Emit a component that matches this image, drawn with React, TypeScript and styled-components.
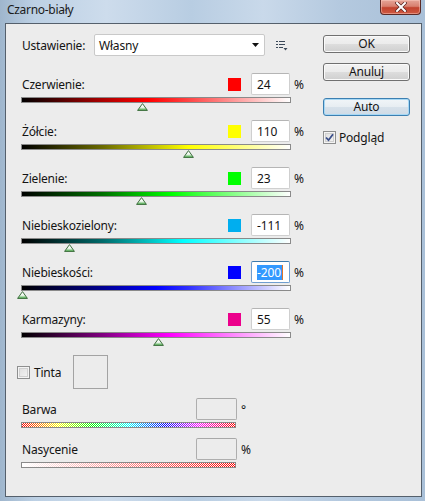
import React from "react";
import styled, { createGlobalStyle } from "styled-components";

const Global = createGlobalStyle`
  html, body { margin: 0; padding: 0; background: #b9cde2; }
  body { font-family: "Noto Sans", "Liberation Sans", sans-serif; }
  * { box-sizing: border-box; }
`;

const Window = styled.div`
  width: 425px;
  height: 501px;
  display: flex;
  flex-direction: column;
  background: linear-gradient(90deg, #9fb6cd 0%, #bcd0e4 8%, #cddcec 25%, #b8cde2 45%, #c9d9ea 62%, #b4c9df 80%, #a9c0d8 100%);
  overflow: hidden;
`;

const TitleBar = styled.div`
  height: 23px;
  flex: none;
  display: flex;
  align-items: flex-start;
  padding-left: 7px;
  padding-right: 4px;
`;

const Title = styled.div`
  margin-top: 2px;
  font-size: 12px;
  letter-spacing: -0.3px;
  color: #1b1b1b;
  line-height: 16px;
`;

const CloseButton = styled.div`
  margin-left: auto;
  width: 41px;
  height: 15px;
  border: 1px solid #5b2a26;
  border-top: none;
  border-radius: 0 0 4px 4px;
  background: linear-gradient(to bottom, #e5a597 0%, #d8806f 45%, #c2432e 55%, #cf5a42 100%);
  box-shadow: inset 0 0 0 1px rgba(255, 210, 200, 0.45);
  display: flex;
  align-items: center;
  justify-content: center;
`;

const Client = styled.div`
  flex: 1;
  margin: 0 3px 4px 5px;
  border: 1px solid #55606c;
  background: #ececec;
  display: flex;
  color: #141414;
  font-size: 12px;
`;

const LeftPanel = styled.div`
  width: 317px;
  flex: none;
  padding: 10px 0 0 15px;
  display: flex;
  flex-direction: column;
`;

const RightPanel = styled.div`
  padding-top: 11px;
  display: flex;
  flex-direction: column;
  align-items: flex-start;
`;

const PresetRow = styled.div`
  display: flex;
  align-items: center;
  height: 22px;
  margin-bottom: 17px;
`;

const PresetLabel = styled.div`
  width: 73px;
  padding-left: 1px;
  letter-spacing: -0.2px;
`;

const Select = styled.div`
  width: 171px;
  height: 22px;
  background: #fff;
  border: 1px solid #c9c9c9;
  border-radius: 2px;
  display: flex;
  align-items: center;
  padding: 0 5px 0 4px;
  letter-spacing: -0.2px;
`;

const SelectText = styled.div`
  flex: 1;
`;

const MenuIcon = styled.div`
  margin-left: 11px;
  display: flex;
`;

const SliderRow = styled.div`
  width: 283px;
  height: 47px;
  flex: none;
  display: flex;
  flex-direction: column;
`;

const Header = styled.div<{ $w: number }>`
  width: ${(p) => p.$w}px;
  height: 22px;
  display: flex;
  align-items: center;
  flex: none;
`;

const Label = styled.div`
  flex: 1;
  padding-left: 1px;
  letter-spacing: -0.2px;
`;

const Swatch = styled.div<{ $c: string }>`
  width: 13px;
  height: 13px;
  background: ${(p) => p.$c};
  margin-right: 10px;
`;

const Field = styled.div<{ $w: number; $focused?: boolean; $disabled?: boolean }>`
  width: ${(p) => p.$w}px;
  height: 22px;
  background: ${(p) => (p.$disabled ? "#ececec" : "#fff")};
  border: 1px solid ${(p) => (p.$focused ? "#6f9ed0" : p.$disabled ? "#aeaeae" : "#cfcfcf")};
  border-top-color: ${(p) => (p.$focused ? "#3d7bad" : p.$disabled ? "#a8a8a8" : "#b5b5b5")};
  border-radius: 2px;
  display: flex;
  align-items: center;
  padding-left: 5px;
  letter-spacing: -0.1px;
`;

const Selected = styled.span`
  background: #3399ff;
  color: #fff;
  line-height: 15px;
  padding: 0 1px 0 0;
`;

const Caret = styled.span`
  width: 1px;
  height: 15px;
  background: #e0742a;
`;

const Unit = styled.div`
  margin-left: 4px;
  width: 10px;
`;

const Bar = styled.div<{ $w: number; $bg?: string }>`
  width: ${(p) => p.$w}px;
  height: 6px;
  margin-top: 2px;
  border: 1px solid #8a8a8a;
  background: ${(p) => p.$bg || "transparent"};
  flex: none;
  display: flex;
  overflow: hidden;
`;

const ThumbTrack = styled.div`
  position: relative;
  width: 270px;
  height: 17px;
`;

const Thumb = styled.svg`
  position: absolute;
  top: 0;
`;

const TintRow = styled.div`
  display: flex;
  align-items: center;
  height: 34px;
  margin-left: -4px;
  margin-bottom: 9px;
`;

const CheckBox = styled.div`
  width: 13px;
  height: 13px;
  border: 1px solid #8e8f8f;
  background: linear-gradient(135deg, #dcdcdc 0%, #f6f6f6 100%);
  box-shadow: inset 0 0 0 1px #f4f4f4, inset 0 0 0 2px #d0d0d0;
  display: flex;
  align-items: center;
  justify-content: center;
  flex: none;
`;

const CheckLabel = styled.div<{ $gap: number }>`
  margin-left: ${(p) => p.$gap}px;
  letter-spacing: -0.2px;
`;

const TintBox = styled.div`
  width: 35px;
  height: 34px;
  border: 1px solid #a3a3a3;
  margin-left: 12px;
`;

const TintSection = styled.div`
  display: flex;
  flex-direction: column;
`;

const SmallRow = styled.div<{ $mb: number }>`
  display: flex;
  flex-direction: column;
  margin-bottom: ${(p) => p.$mb}px;
`;

const Button = styled.div<{ $focus?: boolean; $mb: number }>`
  width: 87px;
  height: 18px;
  border: 1px solid ${(p) => (p.$focus ? "#3c7fb1" : "#707070")};
  border-radius: 3px;
  background: ${(p) =>
    p.$focus
      ? "linear-gradient(to bottom, #f1f5f8 0%, #e7edf2 50%, #d7e1ea 51%, #cfdbe6 100%)"
      : "linear-gradient(to bottom, #f2f2f2 0%, #ebebeb 50%, #dddddd 51%, #cfcfcf 100%)"};
  box-shadow: inset 0 0 0 1px ${(p) => (p.$focus ? "#a6d8f5" : "#fafafa")};
  display: flex;
  align-items: center;
  justify-content: center;
  margin-bottom: ${(p) => p.$mb}px;
  letter-spacing: -0.2px;
  line-height: 14px;
`;

const PreviewRow = styled.div`
  display: flex;
  align-items: center;
  height: 13px;
`;

type SliderDef = {
  label: string;
  color: string;
  value: number;
  grad: string;
  focused?: boolean;
};

const sliders: SliderDef[] = [
  { label: "Czerwienie:", color: "#ff0000", value: 24, grad: "#000 0%, #a00000 28%, #ff0000 47%, #ff3030 58%, #fff 100%" },
  { label: "Żółcie:", color: "#ffff00", value: 110, grad: "#000 0%, #6a6a00 30%, #ffff00 62%, #ffff40 72%, #fff 100%" },
  { label: "Zielenie:", color: "#00ff00", value: 23, grad: "#000 0%, #007000 30%, #00ff00 56%, #40ff40 66%, #fff 100%" },
  { label: "Niebieskozielony:", color: "#00aeef", value: -111, grad: "#000 0%, #006a6a 30%, #00ffff 60%, #40ffff 70%, #fff 100%" },
  { label: "Niebieskości:", color: "#0000ff", value: -200, grad: "#000 0%, #000090 30%, #0000ff 50%, #3030ff 62%, #fff 100%", focused: true },
  { label: "Karmazyny:", color: "#ec008c", value: 55, grad: "#000 0%, #800080 30%, #ff00ff 55%, #ff40ff 66%, #fff 100%" },
];

const hueStops: [number, string][] = [
  [0, "#ff0000"],
  [0.17, "#ffff00"],
  [0.33, "#00ff00"],
  [0.5, "#00ffff"],
  [0.67, "#0000ff"],
  [0.83, "#ff00ff"],
  [1, "#ff0000"],
];
const satStops: [number, string][] = [
  [0, "#ffffff"],
  [1, "#ff0000"],
];

const DitherBar = ({ id, stops, w }: { id: string; stops: [number, string][]; w: number }) => (
  <Bar $w={w}>
    <svg width={w - 2} height={4} shapeRendering="crispEdges">
      <defs>
        <linearGradient id={`g-${id}`} x1="0" y1="0" x2="1" y2="0">
          {stops.map(([o, c]) => (
            <stop key={o} offset={o} stopColor={c} />
          ))}
        </linearGradient>
        <pattern id={`p-${id}`} width="2" height="2" patternUnits="userSpaceOnUse">
          <rect x="0" y="0" width="1" height="1" fill="#ffffff" />
          <rect x="1" y="1" width="1" height="1" fill="#ffffff" />
        </pattern>
      </defs>
      <rect x="0" y="0" width={w - 2} height="4" fill={`url(#g-${id})`} />
      <rect x="0" y="0" width={w - 2} height="4" fill={`url(#p-${id})`} />
    </svg>
  </Bar>
);

const thumbLeft = (v: number) => 1 + ((v + 200) / 500) * 268 - 5.5;

const ThumbIcon = ({ value }: { value: number }) => (
  <Thumb width="11" height="8" viewBox="0 0 11 8" style={{ left: thumbLeft(value) }}>
    <defs>
      <linearGradient id="tg" x1="0" y1="0" x2="0" y2="1">
        <stop offset="0" stopColor="#ffffff" />
        <stop offset="0.55" stopColor="#eef7ee" />
        <stop offset="1" stopColor="#3fa73f" />
      </linearGradient>
    </defs>
    <polygon points="5.5,0.6 10.4,7.4 0.6,7.4" fill="url(#tg)" stroke="#3d6e3d" strokeWidth="1" strokeLinejoin="round" />
  </Thumb>
);

const Slider = ({ s }: { s: SliderDef }) => (
  <SliderRow>
    <Header $w={283}>
      <Label>{s.label}</Label>
      <Swatch $c={s.color} />
      <Field $w={39} $focused={s.focused}>
        {s.focused ? (
          <>
            <Selected>{s.value}</Selected>
            <Caret />
          </>
        ) : (
          s.value
        )}
      </Field>
      <Unit>%</Unit>
    </Header>
    <Bar $w={270} $bg={`linear-gradient(to right, ${s.grad})`} />
    <ThumbTrack>
      <ThumbIcon value={s.value} />
    </ThumbTrack>
  </SliderRow>
);

const Check = () => (
  <svg width="9" height="9" viewBox="0 0 9 9">
    <path d="M1 4.5 L3.5 7.2 L8 1.2" fill="none" stroke="#3b4f8a" strokeWidth="1.8" />
  </svg>
);

export default function App() {
  return (
    <>
      <Global />
      <Window>
        <TitleBar>
          <Title>Czarno-biały</Title>
          <CloseButton>
            <svg width="12" height="10" viewBox="0 0 12 10">
              <path d="M2 1 L10 9 M10 1 L2 9" stroke="#5a2520" strokeWidth="3.4" strokeLinecap="square" />
              <path d="M2 1 L10 9 M10 1 L2 9" stroke="#ffffff" strokeWidth="2" strokeLinecap="square" />
            </svg>
          </CloseButton>
        </TitleBar>
        <Client>
          <LeftPanel>
            <PresetRow>
              <PresetLabel>Ustawienie:</PresetLabel>
              <Select>
                <SelectText>Własny</SelectText>
                <svg width="7" height="4" viewBox="0 0 7 4">
                  <polygon points="0,0 7,0 3.5,4" fill="#111" />
                </svg>
              </Select>
              <MenuIcon>
                <svg width="12" height="11" viewBox="0 0 12 11">
                  <rect x="0" y="1" width="2" height="1" fill="#3a4858" />
                  <rect x="3" y="1" width="6" height="1" fill="#3a4858" />
                  <rect x="0" y="4" width="2" height="1" fill="#3a4858" />
                  <rect x="3" y="4" width="6" height="1" fill="#3a4858" />
                  <rect x="0" y="7" width="2" height="1" fill="#3a4858" />
                  <rect x="3" y="7" width="4" height="1" fill="#3a4858" />
                  <polygon points="7.5,8 11.5,8 9.5,10.5" fill="#3a4858" />
                </svg>
              </MenuIcon>
            </PresetRow>
            {sliders.map((s) => (
              <Slider key={s.label} s={s} />
            ))}
            <TintSection>
              <TintRow>
                <CheckBox />
                <CheckLabel $gap={4}>Tinta</CheckLabel>
                <TintBox />
              </TintRow>
              <SmallRow $mb={10}>
                <Header $w={230}>
                  <Label>Barwa</Label>
                  <Field $w={41} $disabled />
                  <Unit>°</Unit>
                </Header>
                <DitherBar id="hue" stops={hueStops} w={215} />
              </SmallRow>
              <SmallRow $mb={0}>
                <Header $w={230}>
                  <Label>Nasycenie</Label>
                  <Field $w={41} $disabled />
                  <Unit>%</Unit>
                </Header>
                <DitherBar id="sat" stops={satStops} w={215} />
              </SmallRow>
            </TintSection>
          </LeftPanel>
          <RightPanel>
            <Button $mb={10}>OK</Button>
            <Button $mb={17}>Anuluj</Button>
            <Button $focus $mb={15}>Auto</Button>
            <PreviewRow>
              <CheckBox>
                <Check />
              </CheckBox>
              <CheckLabel $gap={3}>Podgląd</CheckLabel>
            </PreviewRow>
          </RightPanel>
        </Client>
      </Window>
    </>
  );
}
